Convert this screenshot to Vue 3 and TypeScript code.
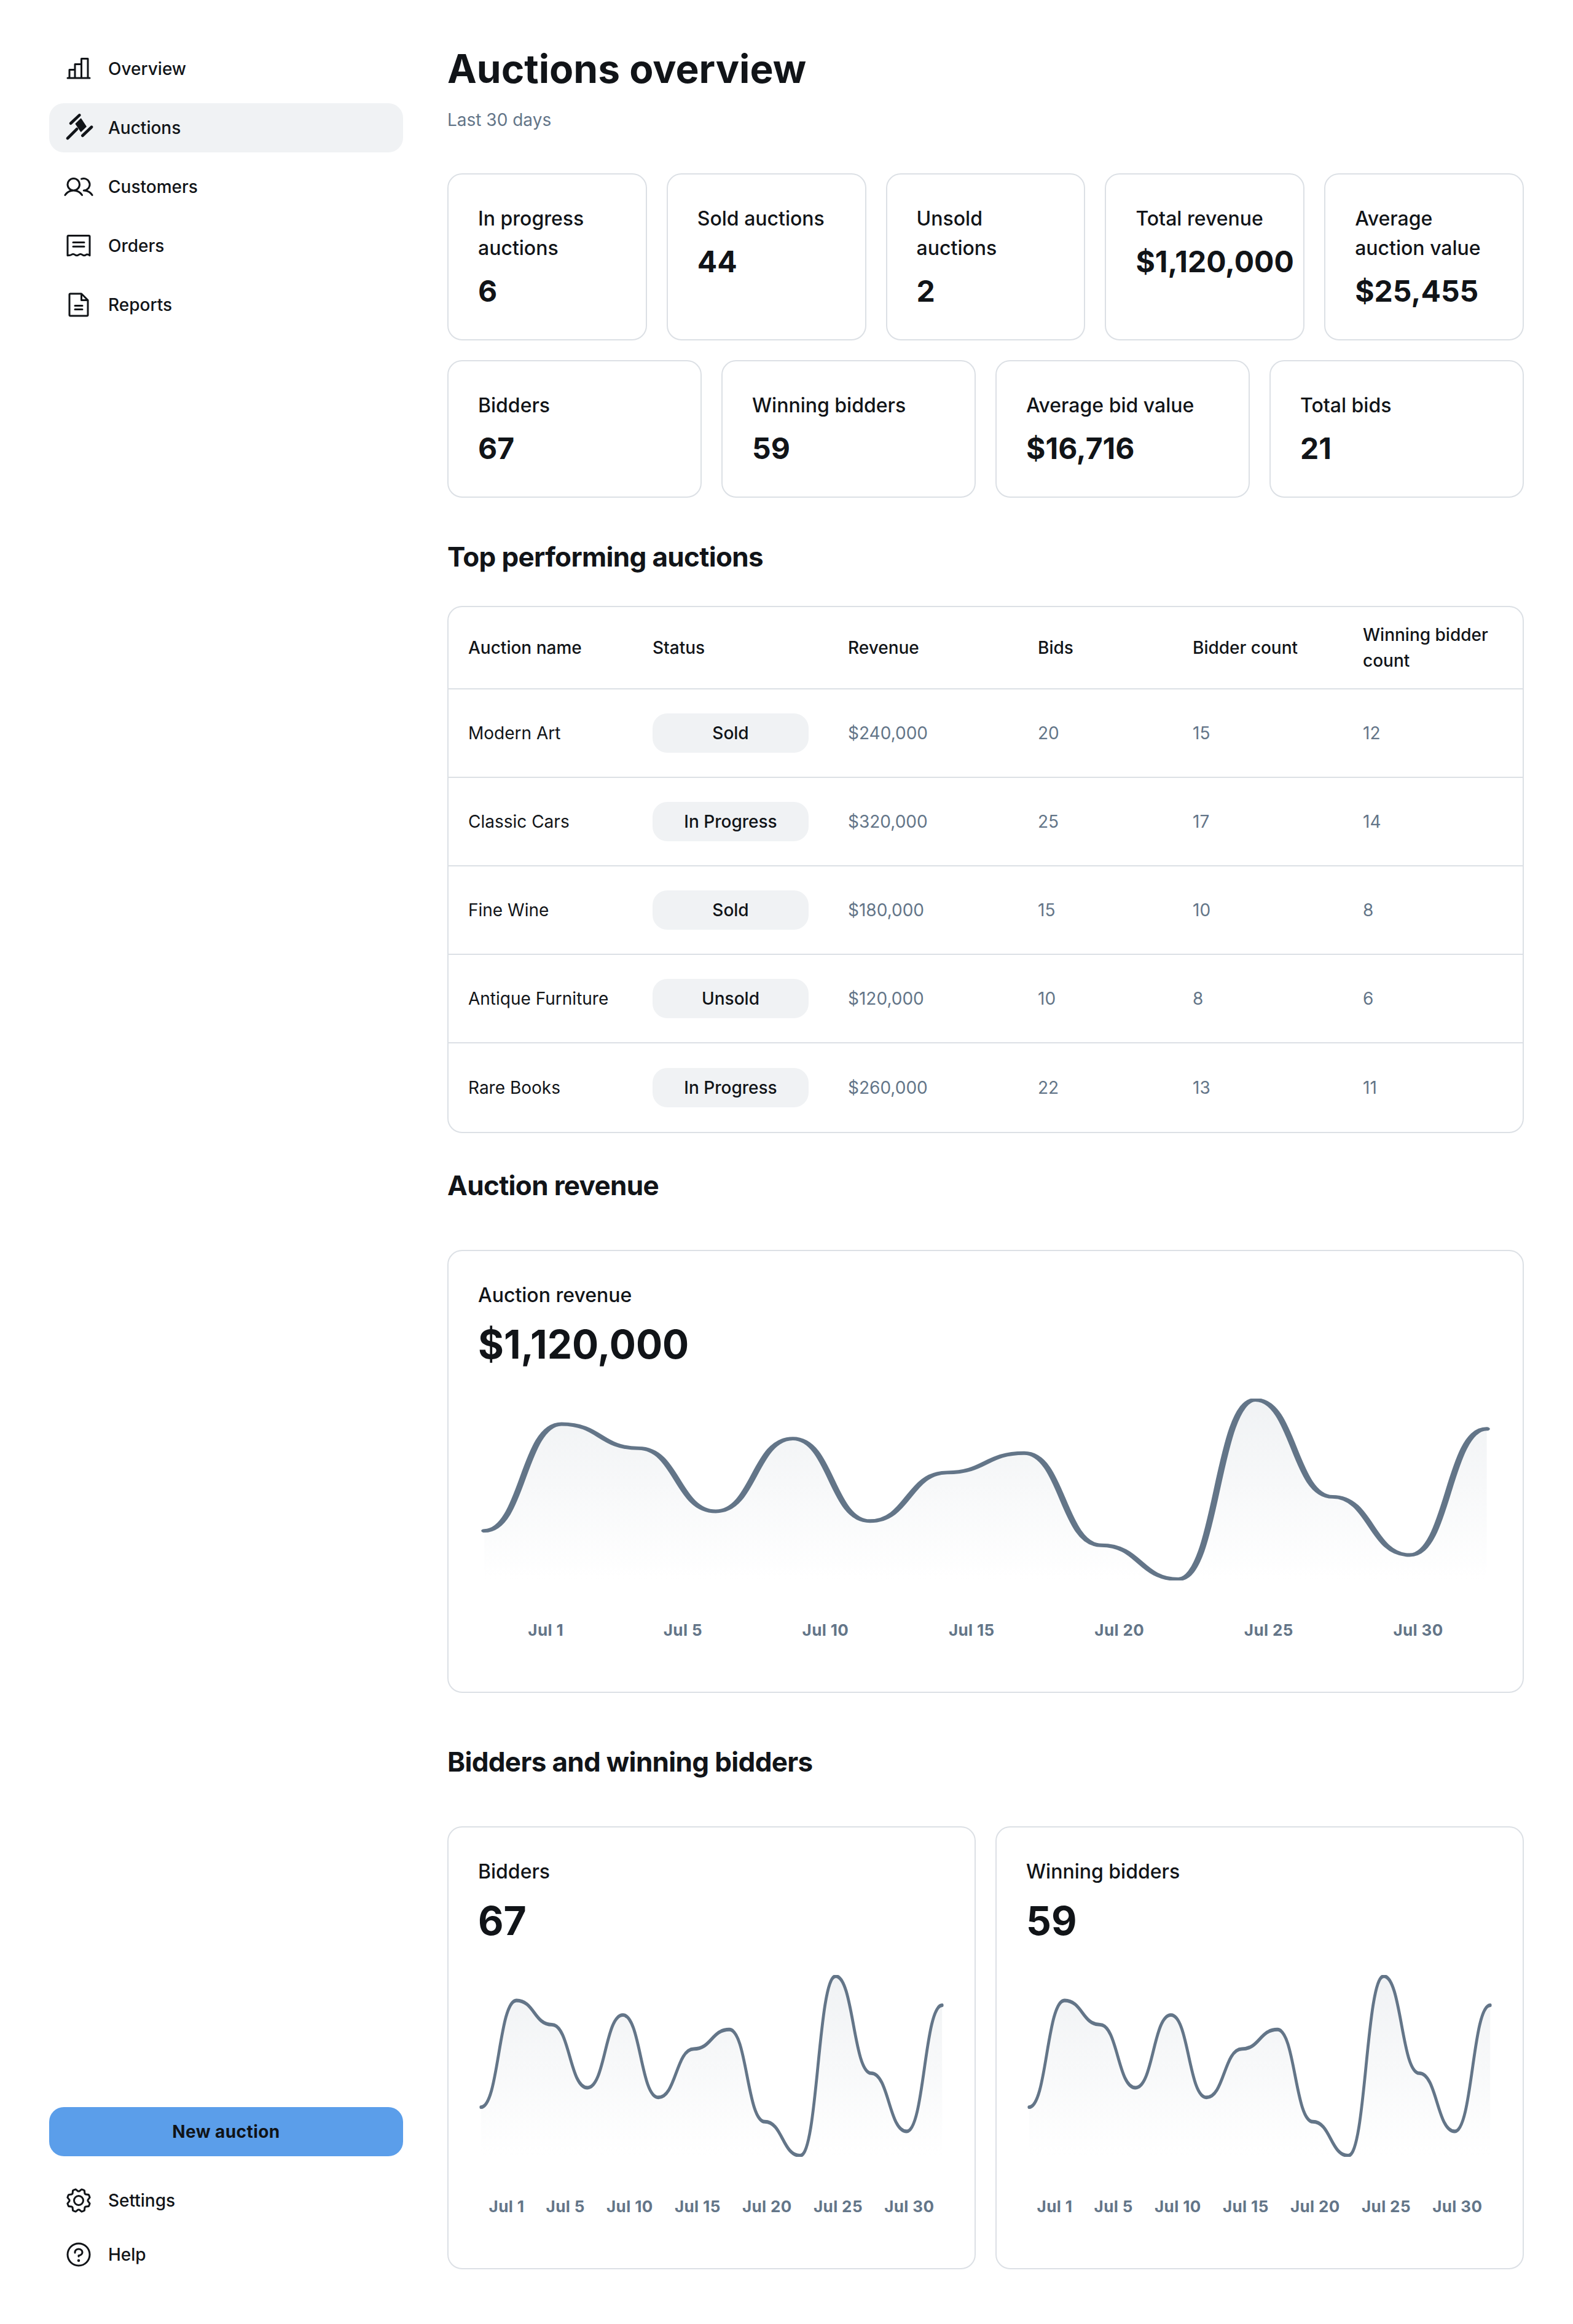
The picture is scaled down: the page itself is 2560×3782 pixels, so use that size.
<template>
  <div class="page">
    <aside class="side">
      <nav class="nav">
        <a v-for="n in navItems" :key="n.label" class="nav-item" :class="{ active: n.label === 'Auctions' }">
          <svg v-if="n.label === 'Auctions'" class="ico" viewBox="0 0 256 256">
            <path d="M32 219 L112 139" class="gavel" stroke-width="25" />
            <path d="M59 89 L135 18" class="gavel" stroke-width="25" />
            <path d="M162 196 L240 121" class="gavel" stroke-width="25" />
            <path d="M103 94 L148 50 L192 117 L148 160 Z" fill="#111418" stroke="#111418" stroke-width="8" stroke-linejoin="round" />
          </svg>
          <svg v-else-if="n.label === 'Orders'" class="ico" viewBox="0 0 256 256">
            <path d="M32 212 V48 a8 8 0 0 1 8-8 H216 a8 8 0 0 1 8 8 V212 c-16 -12 -24 -12 -32 -6 c-10 8 -22 8 -32 0 c-10 -8 -22 -8 -32 0 c-10 8 -22 8 -32 0 c-10 -8 -22 -8 -32 0 c-8 6 -16 6 -32 6 Z" fill="none" stroke="#111418" stroke-width="16" stroke-linejoin="round" />
            <path d="M80 98 H176 M80 134 H176" stroke="#111418" stroke-width="16" stroke-linecap="round" />
          </svg>
          <svg v-else class="ico" viewBox="0 0 256 256"><path :d="n.icon" fill="#111418" /></svg>
          <span>{{ n.label }}</span>
        </a>
      </nav>
      <div class="side-foot">
        <button class="new-btn">New auction</button>
        <div class="foot-links">
          <a v-for="n in footItems" :key="n.label" class="nav-item">
            <svg class="ico" viewBox="0 0 256 256"><path :d="n.icon" fill="#111418" /></svg>
            <span>{{ n.label }}</span>
          </a>
        </div>
      </div>
    </aside>

    <main class="main">
      <h1 class="title">Auctions overview</h1>
      <p class="sub">Last 30 days</p>

      <div v-for="(row, i) in statRows" :key="i" class="stat-row">
        <div v-for="s in row" :key="s.label" class="card stat">
          <p class="lbl">{{ s.label }}</p>
          <p class="val">{{ s.value }}</p>
        </div>
      </div>

      <h2 class="head head-top">Top performing auctions</h2>
      <div class="table-wrap">
        <table class="tbl">
          <thead>
            <tr>
              <th v-for="h in headers" :key="h">{{ h }}</th>
            </tr>
          </thead>
          <tbody>
            <tr v-for="r in rows" :key="r.name">
              <td>{{ r.name }}</td>
              <td><span class="pill">{{ r.status }}</span></td>
              <td class="mut">{{ r.revenue }}</td>
              <td class="mut">{{ r.bids }}</td>
              <td class="mut">{{ r.bidders }}</td>
              <td class="mut">{{ r.winners }}</td>
            </tr>
          </tbody>
        </table>
      </div>

      <h2 class="head head-rev">Auction revenue</h2>
      <div class="card chart-card">
        <p class="lbl">Auction revenue</p>
        <p class="big">$1,120,000</p>
        <svg class="spark" viewBox="-3 0 478 150" fill="none" preserveAspectRatio="none">
          <path :d="areaPath" fill="url(#grad-rev)" />
          <path :d="linePath" stroke="#637588" stroke-width="3" stroke-linecap="round" />
          <defs>
            <linearGradient id="grad-rev" x1="236" y1="1" x2="236" y2="149" gradientUnits="userSpaceOnUse">
              <stop stop-color="#f0f2f4" />
              <stop offset="1" stop-color="#f0f2f4" stop-opacity="0" />
            </linearGradient>
          </defs>
        </svg>
        <div class="axis">
          <span v-for="d in days" :key="d">{{ d }}</span>
        </div>
      </div>

      <h2 class="head head-bid">Bidders and winning bidders</h2>
      <div class="chart-pair">
        <div v-for="c in pairCharts" :key="c.id" class="card chart-card">
          <p class="lbl">{{ c.label }}</p>
          <p class="big">{{ c.value }}</p>
          <svg class="spark" viewBox="-3 0 478 150" fill="none" preserveAspectRatio="none">
            <path :d="areaPath" :fill="`url(#${c.id})`" />
            <path :d="linePath" stroke="#637588" stroke-width="3" stroke-linecap="round" />
            <defs>
              <linearGradient :id="c.id" x1="236" y1="1" x2="236" y2="149" gradientUnits="userSpaceOnUse">
                <stop stop-color="#f0f2f4" />
                <stop offset="1" stop-color="#f0f2f4" stop-opacity="0" />
              </linearGradient>
            </defs>
          </svg>
          <div class="axis">
            <span v-for="d in days" :key="d">{{ d }}</span>
          </div>
        </div>
      </div>
    </main>
  </div>
</template>

<script setup lang="ts">
const navItems = [
  { label: 'Overview', icon: 'M224,200h-8V40a8,8,0,0,0-8-8H152a8,8,0,0,0-8,8V80H96a8,8,0,0,0-8,8v40H48a8,8,0,0,0-8,8v64H32a8,8,0,0,0,0,16H224a8,8,0,0,0,0-16ZM160,48h40V200H160ZM104,96h40V200H104ZM56,144H88v56H56Z' },
  { label: 'Auctions', icon: '' },
  { label: 'Customers', icon: 'M117.25,157.92a60,60,0,1,0-66.5,0A95.83,95.83,0,0,0,3.53,195.63a8,8,0,1,0,13.4,8.74,80,80,0,0,1,134.14,0,8,8,0,0,0,13.4-8.74A95.83,95.83,0,0,0,117.25,157.92ZM40,108a44,44,0,1,1,44,44A44.05,44.05,0,0,1,40,108Zm210.14,98.7a8,8,0,0,1-11.07-2.33A79.83,79.83,0,0,0,172,168a8,8,0,0,1,0-16,44,44,0,1,0-16.34-84.87,8,8,0,1,1-5.94-14.85,60,60,0,0,1,55.53,105.64,95.83,95.83,0,0,1,47.22,37.71A8,8,0,0,1,250.14,206.7Z' },
  { label: 'Orders', icon: '' },
  { label: 'Reports', icon: 'M213.66,82.34l-56-56A8,8,0,0,0,152,24H56A16,16,0,0,0,40,40V216a16,16,0,0,0,16,16H200a16,16,0,0,0,16-16V88A8,8,0,0,0,213.66,82.34ZM160,51.31,188.69,80H160ZM200,216H56V40h88V88a8,8,0,0,0,8,8h48V216Zm-32-80a8,8,0,0,1-8,8H96a8,8,0,0,1,0-16h64A8,8,0,0,1,168,136Zm0,32a8,8,0,0,1-8,8H96a8,8,0,0,1,0-16h64A8,8,0,0,1,168,168Z' },
]

const footItems = [
  { label: 'Settings', icon: 'M128,80a48,48,0,1,0,48,48A48.05,48.05,0,0,0,128,80Zm0,80a32,32,0,1,1,32-32A32,32,0,0,1,128,160Zm88-29.84q.06-2.16,0-4.32l14.92-18.64a8,8,0,0,0,1.48-7.06,107.21,107.21,0,0,0-10.88-26.25,8,8,0,0,0-6-3.93l-23.72-2.64q-1.48-1.56-3-3L186,40.54a8,8,0,0,0-3.94-6,107.71,107.71,0,0,0-26.25-10.87,8,8,0,0,0-7.06,1.49L130.16,40Q128,40,125.84,40L107.2,25.11a8,8,0,0,0-7.06-1.48A107.6,107.6,0,0,0,73.89,34.51a8,8,0,0,0-3.93,6L67.32,64.27q-1.56,1.49-3,3L40.54,70a8,8,0,0,0-6,3.94,107.71,107.71,0,0,0-10.87,26.25,8,8,0,0,0,1.49,7.06L40,125.84Q40,128,40,130.16L25.11,148.8a8,8,0,0,0-1.48,7.06,107.21,107.21,0,0,0,10.88,26.25,8,8,0,0,0,6,3.93l23.72,2.64q1.49,1.56,3,3L70,215.46a8,8,0,0,0,3.94,6,107.71,107.71,0,0,0,26.25,10.87,8,8,0,0,0,7.06-1.49L125.84,216q2.16.06,4.32,0l18.64,14.92a8,8,0,0,0,7.06,1.48,107.21,107.21,0,0,0,26.25-10.88,8,8,0,0,0,3.93-6l2.64-23.72q1.56-1.48,3-3L215.46,186a8,8,0,0,0,6-3.94,107.71,107.71,0,0,0,10.87-26.25,8,8,0,0,0-1.49-7.06Zm-16.1-6.5a73.93,73.93,0,0,1,0,8.68,8,8,0,0,0,1.74,5.48l14.19,17.73a91.57,91.57,0,0,1-6.23,15L187,173.11a8,8,0,0,0-5.1,2.64,74.11,74.11,0,0,1-6.14,6.14,8,8,0,0,0-2.64,5.1l-2.51,22.58a91.32,91.32,0,0,1-15,6.23l-17.74-14.19a8,8,0,0,0-5-1.75h-.48a73.93,73.93,0,0,1-8.68,0,8,8,0,0,0-5.48,1.74L100.45,215.8a91.57,91.57,0,0,1-15-6.23L82.89,187a8,8,0,0,0-2.64-5.1,74.11,74.11,0,0,1-6.14-6.14,8,8,0,0,0-5.1-2.64L46.43,170.6a91.32,91.32,0,0,1-6.23-15l14.19-17.74a8,8,0,0,0,1.74-5.48,73.93,73.93,0,0,1,0-8.68,8,8,0,0,0-1.74-5.48L40.2,100.45a91.57,91.57,0,0,1,6.23-15L69,82.89a8,8,0,0,0,5.1-2.64,74.11,74.11,0,0,1,6.14-6.14A8,8,0,0,0,82.89,69L85.4,46.43a91.32,91.32,0,0,1,15-6.23l17.74,14.19a8,8,0,0,0,5.48,1.74,73.93,73.93,0,0,1,8.68,0,8,8,0,0,0,5.48-1.74L155.55,40.2a91.57,91.57,0,0,1,15,6.23L173.11,69a8,8,0,0,0,2.64,5.1,74.11,74.11,0,0,1,6.14,6.14,8,8,0,0,0,5.1,2.64l22.58,2.51a91.32,91.32,0,0,1,6.23,15l-14.19,17.74A8,8,0,0,0,199.87,123.66Z' },
  { label: 'Help', icon: 'M140,180a12,12,0,1,1-12-12A12,12,0,0,1,140,180ZM128,72c-22.06,0-40,16.15-40,36v4a8,8,0,0,0,16,0v-4c0-11,10.77-20,24-20s24,9,24,20-10.77,20-24,20a8,8,0,0,0-8,8v8a8,8,0,0,0,16,0v-.72c18.24-3.35,32-17.9,32-35.28C168,88.15,150.06,72,128,72Zm104,56A104,104,0,1,1,128,24,104.11,104.11,0,0,1,232,128Zm-16,0a88,88,0,1,0-88,88A88.1,88.1,0,0,0,216,128Z' },
]

const statRows = [
  [
    { label: 'In progress auctions', value: '6' },
    { label: 'Sold auctions', value: '44' },
    { label: 'Unsold auctions', value: '2' },
    { label: 'Total revenue', value: '$1,120,000' },
    { label: 'Average auction value', value: '$25,455' },
  ],
  [
    { label: 'Bidders', value: '67' },
    { label: 'Winning bidders', value: '59' },
    { label: 'Average bid value', value: '$16,716' },
    { label: 'Total bids', value: '21' },
  ],
]

const headers = ['Auction name', 'Status', 'Revenue', 'Bids', 'Bidder count', 'Winning bidder count']

const rows = [
  { name: 'Modern Art', status: 'Sold', revenue: '$240,000', bids: 20, bidders: 15, winners: 12 },
  { name: 'Classic Cars', status: 'In Progress', revenue: '$320,000', bids: 25, bidders: 17, winners: 14 },
  { name: 'Fine Wine', status: 'Sold', revenue: '$180,000', bids: 15, bidders: 10, winners: 8 },
  { name: 'Antique Furniture', status: 'Unsold', revenue: '$120,000', bids: 10, bidders: 8, winners: 6 },
  { name: 'Rare Books', status: 'In Progress', revenue: '$260,000', bids: 22, bidders: 13, winners: 11 },
]

const days = ['Jul 1', 'Jul 5', 'Jul 10', 'Jul 15', 'Jul 20', 'Jul 25', 'Jul 30']

const pairCharts = [
  { id: 'grad-bid', label: 'Bidders', value: '67' },
  { id: 'grad-win', label: 'Winning bidders', value: '59' },
]

// same curve in all three charts, stepped beziers between these y values
const points = [109, 21, 41, 93, 33, 101, 61, 45, 121, 149, 1, 81, 129, 25]
const step = 472 / (points.length - 1)
const linePath = points.reduce((d, y, i) => {
  if (i === 0) return `M0 ${y}`
  const x0 = step * (i - 1)
  const x1 = step * i
  const mid = (x0 + x1) / 2
  return `${d}C${mid} ${points[i - 1]} ${mid} ${y} ${x1} ${y}`
}, '')
const areaPath = `${linePath}V149H0V109Z`
</script>

<style>
html, body { background: #fff; }
</style>

<style scoped>
* { box-sizing: border-box; }
p, h1, h2 { margin: 0; }
.page {
  display: flex;
  gap: 72px;
  padding: 0 80px;
  background: #fff;
  color: #111418;
  font-family: Inter, "Noto Sans", sans-serif;
}
.side {
  width: 576px;
  flex: none;
  display: flex;
  flex-direction: column;
  justify-content: space-between;
  padding: 72px 0;
}
.nav { display: flex; flex-direction: column; gap: 16px; }
.nav-item {
  display: flex;
  align-items: center;
  gap: 24px;
  height: 80px;
  padding: 0 24px;
  border-radius: 24px;
  font-size: 28px;
  font-weight: 500;
  line-height: 42px;
}
.nav-item.active { background: #f0f2f4; }
.ico { width: 48px; height: 48px; flex: none; }
.gavel { stroke: #111418; stroke-linecap: round; fill: none; }
.new-btn {
  display: block;
  width: 100%;
  height: 80px;
  border: 0;
  border-radius: 24px;
  background: #5b9eea;
  color: #111418;
  font-family: inherit;
  font-size: 28px;
  font-weight: 700;
  letter-spacing: 0.015em;
}
.foot-links { display: flex; flex-direction: column; gap: 8px; margin-top: 32px; }
.main { width: 1752px; flex: none; padding: 72px 0 88px; }
.title { font-size: 64px; font-weight: 700; line-height: 80px; }
.sub { margin-top: 22px; margin-bottom: 66px; font-size: 28px; line-height: 42px; color: #637588; }
.card { border: 2px solid #dce0e5; border-radius: 24px; background: #fff; }
.stat-row { display: flex; gap: 32px; margin-bottom: 32px; }
.stat-row .stat { flex: 1 1 0; min-width: 0; padding: 48px; }
.lbl { font-size: 32px; font-weight: 500; line-height: 48px; }
.val { margin-top: 16px; font-size: 48px; font-weight: 700; line-height: 60px; white-space: nowrap; }
.head { font-size: 44px; font-weight: 700; line-height: 55px; letter-spacing: -0.015em; }
.head-top { margin-top: 69px; margin-bottom: 52px; }
.head-rev { margin-top: 58px; margin-bottom: 77px; }
.head-bid { margin-top: 85px; margin-bottom: 77px; }
.table-wrap { border: 2px solid #dce0e5; border-radius: 24px; overflow: hidden; }
.tbl { width: 100%; table-layout: fixed; border-collapse: separate; border-spacing: 0; font-size: 28px; line-height: 42px; }
.tbl th { padding: 24px 32px; text-align: left; font-weight: 500; }
.tbl td { height: 144px; padding: 16px 32px; border-top: 2px solid #dce0e5; font-weight: 400; }
.tbl tr:last-child td { height: 146px; }
.tbl th:nth-child(1) { width: 300px; }
.tbl th:nth-child(2) { width: 318px; }
.tbl th:nth-child(3) { width: 309px; }
.tbl th:nth-child(4) { width: 252px; }
.tbl th:nth-child(5) { width: 277px; }
.tbl .mut { color: #637588; }
.pill {
  display: flex;
  align-items: center;
  justify-content: center;
  height: 64px;
  border-radius: 24px;
  background: #f0f2f4;
  font-weight: 500;
}
.chart-card { padding: 48px; padding-bottom: 80px; }
.big { margin-top: 16px; font-size: 64px; font-weight: 700; line-height: 80px; }
.spark { display: block; width: 100%; height: 296px; margin-top: 48px; }
.axis {
  display: flex;
  justify-content: space-around;
  margin-top: 61px;
  font-size: 26px;
  font-weight: 700;
  line-height: 40px;
  letter-spacing: 0.015em;
  color: #637588;
}
.chart-pair { display: flex; gap: 32px; }
.chart-pair .card { flex: 1 1 0; min-width: 0; }
</style>
